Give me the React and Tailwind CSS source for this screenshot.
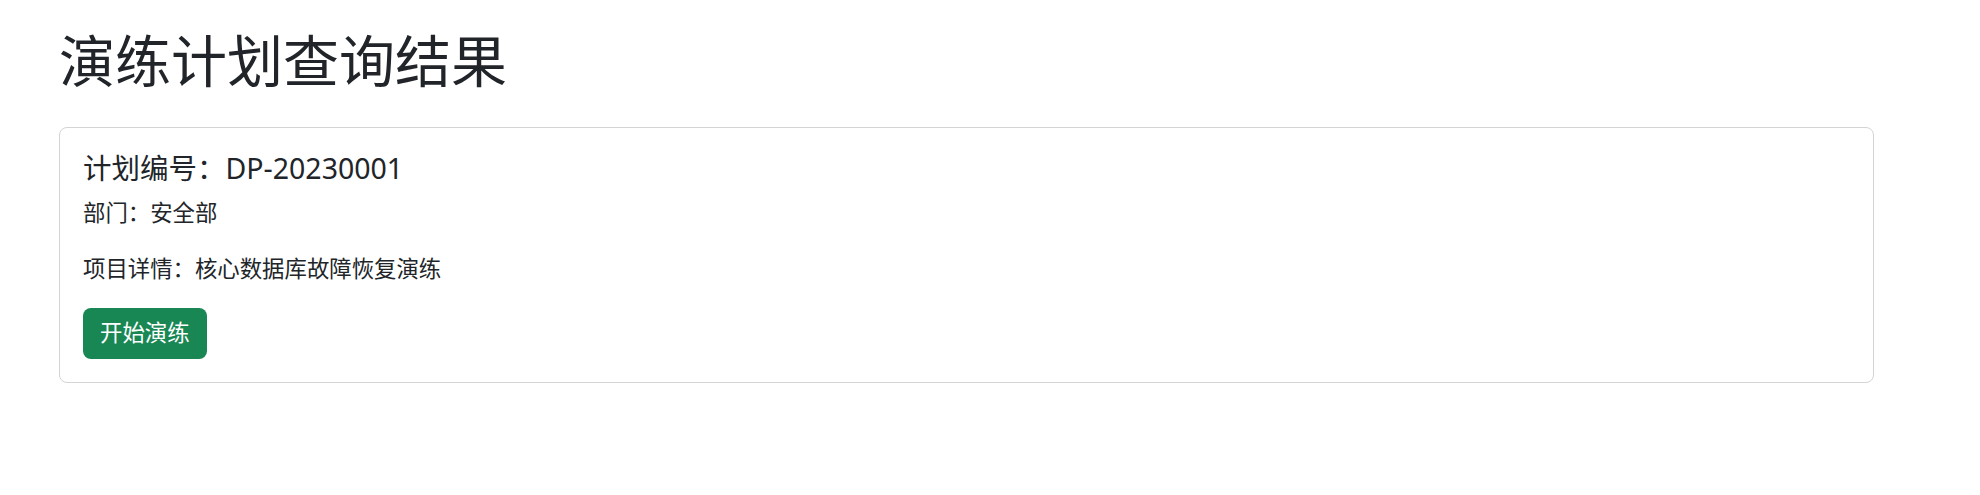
export default function App() {
  const plan = {
    id: "DP-20230001",
    dept: "安全部",
    detail: "核心数据库故障恢复演练",
  };

  return (
    <div
      className="min-h-screen bg-white text-[#212529]"
      style={{ fontFamily: '"Noto Sans", "Noto Sans CJK SC", sans-serif' }}
    >
      <div className="ml-[59px] w-[1815px] pt-[27px]">
        <h1 className="text-[56px] leading-[1.2] font-normal mb-[33px]">
          演练计划查询结果
        </h1>

        {/* plan card */}
        <div className="border border-[#d3d4d5] rounded-[8px] px-[23px] py-[23px]">
          <h5 className="text-[28.5px] leading-[1.2] mb-[11px]">
            计划编号：{plan.id}
          </h5>
          <p className="text-[22.4px] leading-[1.5] mb-[22px]">
            部门：{plan.dept}
          </p>
          <p className="text-[22.4px] leading-[1.5] mb-[22px]">
            项目详情：{plan.detail}
          </p>
          <button
            type="button"
            className="h-[51px] px-[17px] rounded-[8px] bg-[#198754] text-white text-[22.4px] leading-none"
          >
            开始演练
          </button>
        </div>
      </div>
    </div>
  );
}
